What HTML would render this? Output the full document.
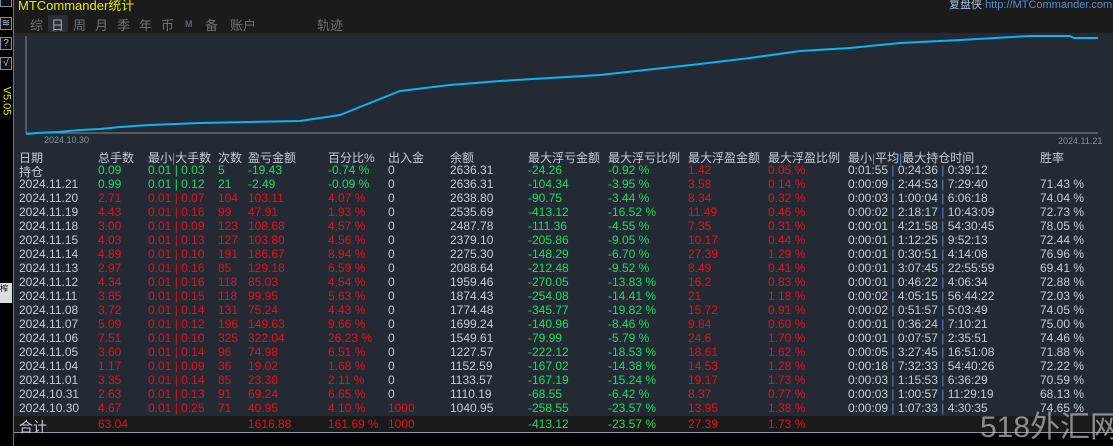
<!DOCTYPE html><html><head><meta charset="utf-8"><style>
body{margin:0;width:1113px;height:446px;background:#000;position:relative;overflow:hidden;font-family:"Liberation Sans","Noto Sans CJK SC",sans-serif;font-size:12px}
.a{position:absolute;white-space:nowrap}
.g{color:#19e060}.r{color:#e8101a}.w{color:#c4ccd8}.b{color:#5a8ad0}
.tab{position:absolute;top:15px;color:#707070;font-size:13px}
.btn{position:absolute;left:0;width:10px;height:11px;border:1px solid #8090a0;background:#111;color:#c0c8d0;font-size:10px;line-height:11px;text-align:center}
</style></head><body>
<div class="a" style="left:13px;top:0;width:1100px;height:33px;background:#1b1b1b"></div>
<div class="a" style="left:13px;top:0;width:1px;height:446px;background:#6a7480"></div>
<div class="a" style="left:18px;top:-5px;color:#e8e800;font-size:13px">MTCommander统计</div>
<div class="a" style="left:949px;top:-4px;color:#a8c0e0;font-size:11px">复盘侠 <span style="color:#5a8ad0">http://MTCommander.com</span></div>
<div class="tab" style="left:30px">综</div>
<div class="a" style="left:48px;top:15px;width:20px;height:17px;background:#2a2f36;border-radius:2px"></div>
<div class="tab" style="left:51px;color:#a0a8b0">日</div>
<div class="tab" style="left:73px">周</div>
<div class="tab" style="left:95px">月</div>
<div class="tab" style="left:117px">季</div>
<div class="tab" style="left:139px">年</div>
<div class="tab" style="left:161px">币</div>
<div class="tab" style="left:185px;font-size:9px;top:19px;font-weight:bold;color:#5a6270">M</div>
<div class="tab" style="left:205px">备</div>
<div class="tab" style="left:230px">账户</div>
<div class="tab" style="left:317px">轨迹</div>
<div class="btn" style="top:-6px"></div>
<div class="btn" style="top:17px">≋</div>
<div class="btn" style="top:37px">?</div>
<div class="btn" style="top:57px">√</div>
<div class="a" style="left:-8px;top:95px;color:#e8e800;font-size:11px;transform:rotate(90deg)">V5.05</div>
<div class="a" style="left:0;top:283px;width:12px;height:20px;background:#ddd;font-size:8px;color:#000">榨</div>
<div class="a" style="left:14px;top:33px;width:1099px;height:399px;background:#232a33"></div>
<svg class="a" style="left:14px;top:33px" width="1099" height="115">
<line x1="12" y1="3" x2="12" y2="100" stroke="#888" stroke-width="1"/>
<line x1="12" y1="100" x2="1084" y2="100" stroke="#888" stroke-width="1"/>
<polyline fill="none" stroke="#0ab4f0" stroke-width="2" points="12,101 23,100 44,99 66,97 86,96 106,94 136,92 186,90 236,89 286,88 326,82 331,80 386,58 436,52 486,48 586,42 686,31 736,25 786,18 836,15 886,10 946,7 1016,3 1056,3 1060,5 1084,5"/>
<text x="30" y="110" fill="#8a909a" font-size="9" font-family="Liberation Sans">2024.10.30</text>
<text x="1044" y="111" fill="#8a909a" font-size="9" font-family="Liberation Sans">2024.11.21</text>
</svg>
<div class="a" style="left:14px;top:416px;width:1099px;height:16px;background:#1a1a1a"></div>
<div class="a" style="left:14px;top:432px;width:1099px;height:1px;background:#8898a8"></div>
<div id="t"></div>
<div class="a" style="left:980px;top:402px;color:rgba(190,190,190,0.7);font-size:30px">518外汇网</div>
<script>
var cols=[19,98,148,218,248,328,388,450,528,608,688,768,848,1040];
var hdr=["日期","总手数","最小|大手数","次数","盈亏金额","百分比%","出入金","余额","最大浮亏金额","最大浮亏比例","最大浮盈金额","最大浮盈比例","最小|平均|最大持仓时间","胜率"];
var rows=[
["持仓","0.09","0.01|0.03","5","-19.43","-0.74 %","0","2636.31","-24.26","-0.92 %","1.42","0.05 %","0:01:55|0:24:36|0:39:12",""],
["2024.11.21","0.99","0.01|0.12","21","-2.49","-0.09 %","0","2636.31","-104.34","-3.95 %","3.58","0.14 %","0:00:09|2:44:53|7:29:40","71.43 %"],
["2024.11.20","2.71","0.01|0.07","104","103.11","4.07 %","0","2638.80","-90.75","-3.44 %","8.34","0.32 %","0:00:03|1:00:04|6:06:18","74.04 %"],
["2024.11.19","4.43","0.01|0.16","99","47.91","1.93 %","0","2535.69","-413.12","-16.52 %","11.49","0.46 %","0:00:02|2:18:17|10:43:09","72.73 %"],
["2024.11.18","3.00","0.01|0.09","123","108.68","4.57 %","0","2487.78","-111.36","-4.55 %","7.35","0.31 %","0:00:01|4:21:58|54:30:45","78.05 %"],
["2024.11.15","4.03","0.01|0.13","127","103.80","4.56 %","0","2379.10","-205.86","-9.05 %","10.17","0.44 %","0:00:01|1:12:25|9:52:13","72.44 %"],
["2024.11.14","4.89","0.01|0.10","191","186.67","8.94 %","0","2275.30","-148.29","-6.70 %","27.39","1.29 %","0:00:01|0:30:51|4:14:08","76.96 %"],
["2024.11.13","2.97","0.01|0.16","85","129.18","6.59 %","0","2088.64","-212.48","-9.52 %","8.49","0.41 %","0:00:01|3:07:45|22:55:59","69.41 %"],
["2024.11.12","4.34","0.01|0.16","118","85.03","4.54 %","0","1959.46","-270.05","-13.83 %","16.2","0.83 %","0:00:01|0:46:22|4:06:34","72.88 %"],
["2024.11.11","3.85","0.01|0.15","118","99.95","5.63 %","0","1874.43","-254.08","-14.41 %","21","1.18 %","0:00:02|4:05:15|56:44:22","72.03 %"],
["2024.11.08","3.72","0.01|0.14","131","75.24","4.43 %","0","1774.48","-345.77","-19.82 %","15.72","0.91 %","0:00:02|0:51:57|5:03:49","74.05 %"],
["2024.11.07","5.09","0.01|0.12","196","149.63","9.66 %","0","1699.24","-140.96","-8.46 %","9.84","0.60 %","0:00:01|0:36:24|7:10:21","75.00 %"],
["2024.11.06","7.51","0.01|0.10","325","322.04","26.23 %","0","1549.61","-79.99","-5.79 %","24.6","1.70 %","0:00:01|0:07:57|2:35:51","74.46 %"],
["2024.11.05","3.60","0.01|0.14","96","74.98","6.51 %","0","1227.57","-222.12","-18.53 %","18.61","1.62 %","0:00:05|3:27:45|16:51:08","71.88 %"],
["2024.11.04","1.17","0.01|0.09","36","19.02","1.68 %","0","1152.59","-167.02","-14.38 %","14.53","1.28 %","0:00:18|7:32:33|54:40:26","72.22 %"],
["2024.11.01","3.35","0.01|0.14","85","23.38","2.11 %","0","1133.57","-167.19","-15.24 %","19.17","1.73 %","0:00:03|1:15:53|6:36:29","70.59 %"],
["2024.10.31","2.63","0.01|0.13","91","69.24","6.65 %","0","1110.19","-68.55","-6.42 %","8.37","0.77 %","0:00:03|1:00:57|11:29:19","68.13 %"],
["2024.10.30","4.67","0.01|0.25","71","40.95","4.10 %","1000","1040.95","-258.55","-23.57 %","13.95","1.38 %","0:00:09|1:07:33|4:30:35","74.65 %"],
["合计","63.04","","","1616.88","161.69 %","1000","","-413.12","-23.57 %","27.39","1.73 %","",""]];
var h="";
function cell(x,y,cls,t){return '<div class="a '+cls+'" style="left:'+x+'px;top:'+y+'px">'+t+'</div>';}
hdr.forEach(function(t,i){h+=cell(cols[i],149,"w",t.replace(/\|/g,'<span class="b">|</span>'));});
rows.forEach(function(r,k){
 var y=163+k*14; if(k==18)y=417;
 var pos=r[0]=="合计"||parseFloat(r[4])>0; var c=pos?"r":"g";
 r.forEach(function(t,i){
  var cl;
  if(i==0)cl="w";else if(i==6||i==7||i==12||i==13)cl="w";else if(i==8||i==9)cl="g";else if(i==10||i==11)cl="r";else cl=c;
  if(i==6&&t=="1000")cl="r";
  if(i==0&&k==18){t='<span style="font-size:14px">'+t+'</span>';}
  t=t.replace(/\|/g,'<span class="'+(i==2?cl:"b")+'"> | </span>');
  h+=cell(cols[i],y,cl,t);
 });
});
document.getElementById("t").innerHTML=h;
</script>
</body></html>
